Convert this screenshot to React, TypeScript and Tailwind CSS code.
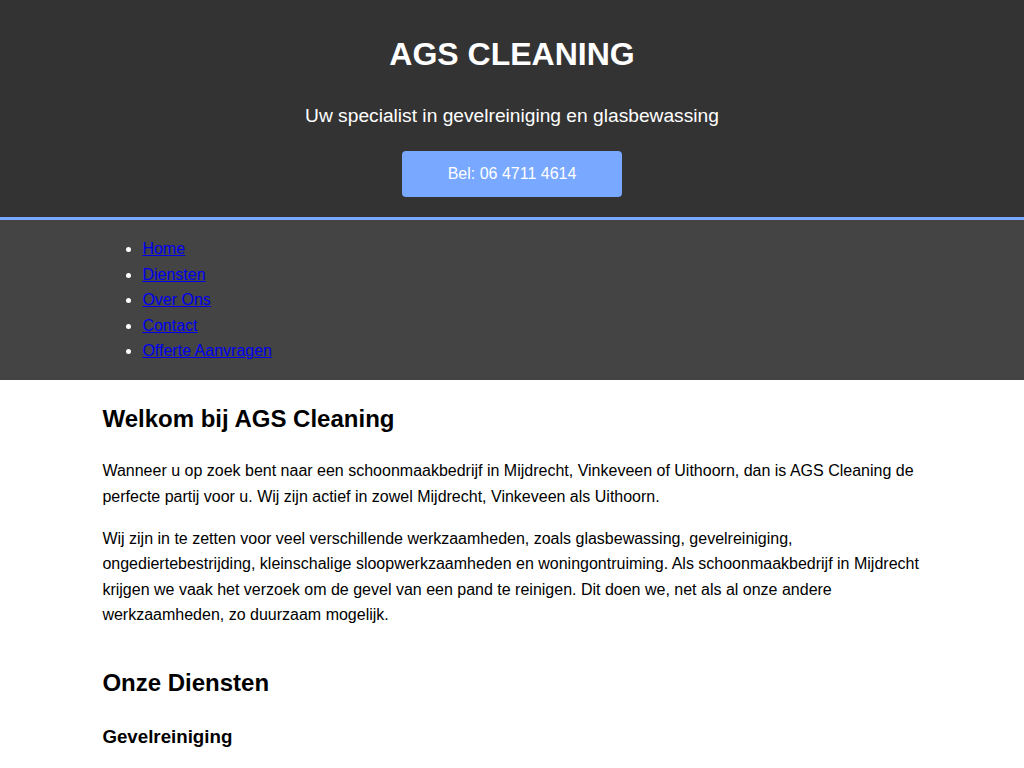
import React from "react";

const navItems = ["Home", "Diensten", "Over Ons", "Contact", "Offerte Aanvragen"];

export default function App() {
  return (
    <div className="min-h-screen bg-white font-['Liberation_Sans',Arial,sans-serif] text-black">
      <header className="border-b-[3px] border-[#78a8ff] bg-[#333333] pb-5 pt-[29px] text-center text-white">
        <h1 className="text-[32px] font-bold leading-[51px]">AGS CLEANING</h1>
        <p className="mt-5 text-[19.2px] leading-[31px]">
          Uw specialist in gevelreiniging en glasbewassing
        </p>
        <a
          href="#"
          className="mx-auto mt-5 flex h-[46px] w-[220px] items-center justify-center rounded-[4px] bg-[#78a8ff] text-base text-white"
        >
          Bel: 06 4711 4614
        </a>
      </header>

      <nav className="bg-[#444444] py-4 text-white">
        <ul className="mx-auto w-[80%] list-disc pl-10 text-base leading-[25.6px]">
          {navItems.map((item) => (
            <li key={item}>
              <a href="#" className="text-[#0000ee] underline">
                {item}
              </a>
            </li>
          ))}
        </ul>
      </nav>

      <main className="mx-auto w-[80%] pt-5 text-base leading-[25.6px]">
        <section className="mb-9">
          <h2 className="mb-5 text-2xl font-bold leading-[38.4px]">Welkom bij AGS Cleaning</h2>
          <p className="mb-4">
            Wanneer u op zoek bent naar een schoonmaakbedrijf in Mijdrecht, Vinkeveen of Uithoorn, dan is AGS
            Cleaning de perfecte partij voor u. Wij zijn actief in zowel Mijdrecht, Vinkeveen als Uithoorn.
          </p>
          <p>
            Wij zijn in te zetten voor veel verschillende werkzaamheden, zoals glasbewassing, gevelreiniging,
            ongediertebestrijding, kleinschalige sloopwerkzaamheden en woningontruiming. Als schoonmaakbedrijf in
            Mijdrecht krijgen we vaak het verzoek om de gevel van een pand te reinigen. Dit doen we, net als al onze
            andere werkzaamheden, zo duurzaam mogelijk.
          </p>
        </section>

        <section>
          <h2 className="mb-5 text-2xl font-bold leading-[38.4px]">Onze Diensten</h2>
          <h3 className="text-[18.72px] font-bold leading-[30px]">Gevelreiniging</h3>
        </section>
      </main>
    </div>
  );
}
